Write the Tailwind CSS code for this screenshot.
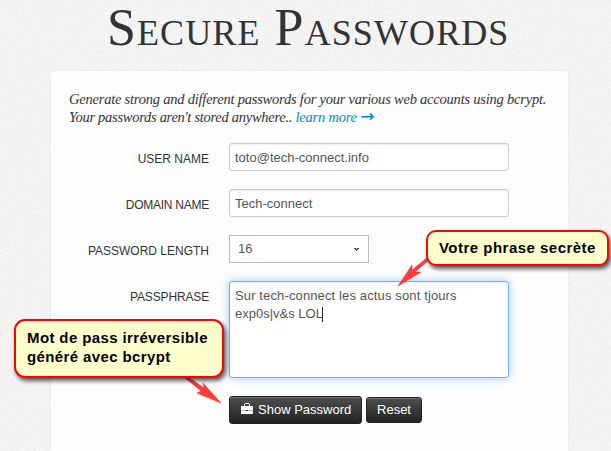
<!DOCTYPE html>
<html lang="en">
<head>
  <meta charset="UTF-8" />
  <meta name="viewport" content="width=device-width, initial-scale=1.0" />
  <title>Secure Passwords</title>
  <script src="https://cdn.jsdelivr.net/npm/@tailwindcss/browser@4"></script>
</head>
<body class="relative h-[451px] overflow-hidden bg-[#f3f3f3] font-['Liberation_Sans',Arial,sans-serif] text-[13px] leading-[18px] text-[#333]">
  <!-- paper texture -->
  <svg class="absolute inset-0 -z-10 h-full w-full" aria-hidden="true">
    <filter id="grain" x="0" y="0" width="100%" height="100%" color-interpolation-filters="sRGB">
      <feTurbulence type="fractalNoise" baseFrequency="0.6" numOctaves="2" seed="4" />
      <feColorMatrix values="0.07 0 0 0 0.918  0.07 0 0 0 0.918  0.07 0 0 0 0.918  0 0 0 0 1" />
    </filter>
    <rect width="100%" height="100%" filter="url(#grain)" />
  </svg>

  <h1 class="h-[71px] pl-[107px] font-['Liberation_Serif',serif] text-[52px] leading-[56px] tracking-[1.1px] whitespace-nowrap [font-variant:small-caps]">Secure Passwords</h1>

  <div class="ml-[51px] h-[400px] w-[517px] rounded-t-[3px] bg-[#fdfdfd] px-[18px] pt-[19px] shadow-[0_0_2px_rgba(0,0,0,0.08)]">
    <p class="h-[53px] font-['Liberation_Serif',serif] text-[14.5px] leading-[18px] tracking-[-0.22px] whitespace-nowrap italic">
      Generate strong and different passwords for your various web accounts using bcrypt.<br>
      <span class="tracking-[-0.28px]">Your passwords aren't stored anywhere.. </span><a href="#" class="text-[#0088cc]">learn more <span class="font-['DejaVu_Sans'] text-[17px] leading-none not-italic">→</span></a>
    </p>

    <form class="flex flex-col gap-[18px]" onsubmit="return false">
      <div class="flex gap-5">
        <label for="user" class="w-[140px] pt-[7px] text-right text-[12px]">USER NAME</label>
        <input id="user" type="text" value="toto@tech-connect.info" class="h-7 w-[280px] rounded-[3px] border border-[#ccc] bg-white px-[5px] text-[13px] text-[#555] shadow-[inset_0_1px_1px_rgba(0,0,0,0.075)]" />
      </div>
      <div class="flex gap-5">
        <label for="domain" class="w-[140px] pt-[7px] text-right text-[12px] tracking-[-0.25px]">DOMAIN NAME</label>
        <input id="domain" type="text" value="Tech-connect" class="h-7 w-[280px] rounded-[3px] border border-[#ccc] bg-white px-[5px] text-[13px] text-[#555] shadow-[inset_0_1px_1px_rgba(0,0,0,0.075)]" />
      </div>
      <div class="flex gap-5">
        <span class="w-[140px] pt-[7px] text-right text-[12px]">PASSWORD LENGTH</span>
        <div class="flex h-7 w-[140px] items-center justify-between border border-[#bbb] bg-white pl-[8px] pr-[9px] text-[#555]">
          <span>16</span>
          <svg class="h-[3px] w-[5px]" viewBox="0 0 5 3" shape-rendering="crispEdges"><path d="M0 0h2v1h1V0h2v1H4v1H3v1H2V2H1V1H0z" fill="#444" /></svg>
        </div>
      </div>
      <div class="flex gap-5">
        <span class="w-[140px] pt-[7px] text-right text-[12px] tracking-[-0.15px]">PASSPHRASE</span>
        <div class="h-[97px] w-[280px] rounded-[3px] border border-[#6fb5ee] bg-white px-[5px] pt-[5px] text-[#555] shadow-[inset_0_1px_1px_rgba(0,0,0,0.075),0_0_8px_rgba(82,168,236,0.6)]">
          <span class="tracking-[0.13px]">Sur tech-connect les actus sont tjours</span><br>exp0s|v&amp;s LOL<span class="-ml-px inline-block h-[15px] w-px bg-[#222] align-middle"></span>
        </div>
      </div>
      <div class="flex items-center gap-1 pl-[160px]">
        <button class="flex h-7 w-[133px] items-center rounded-[3px] border border-[#222] bg-linear-to-b from-[#505050] to-[#222] pl-[11px] text-[13px] text-white shadow-[inset_0_1px_0_rgba(255,255,255,0.2)]">
          <svg class="mr-[5px] -mt-[3px] h-[11px] w-3" viewBox="0 0 12 11" shape-rendering="crispEdges">
            <path d="M4 0h4v1h1v2h3v4H0V3h3V1h1zM4 1v2h4V1z" fill="#fff" fill-rule="evenodd" />
            <path d="M0 8h12v3H0z" fill="#fff" />
            <path d="M0 7h5v1H0zM7 7h5v1H7z" fill="#bbb" />
          </svg>
          Show Password
        </button>
        <button class="h-[26px] w-14 rounded-[3px] border border-[#222] bg-linear-to-b from-[#505050] to-[#222] text-[13px] leading-[24px] text-white shadow-[inset_0_1px_0_rgba(255,255,255,0.2)]">Reset</button>
      </div>
    </form>
  </div>

  <!-- callout arrows -->
  <svg class="absolute inset-0 h-full w-full" viewBox="0 0 611 451" aria-hidden="true">
    <g fill="#ff3b3b" stroke="#e02828" stroke-width="0.5">
      <path d="M398 286L412 265L412 270L428 257L430 259L415 272L421 272Z" />
      <path d="M221 403L197 393L201 391L184 377L188 377L204 388L203 383Z" />
    </g>
  </svg>

  <!-- callouts -->
  <div class="absolute left-[426px] top-[230px] flex h-[36px] w-[183px] items-center rounded-[10px] border-2 border-[#f00808] bg-[#ffffcc] pl-[11px] text-[15px] font-bold tracking-[0.48px] whitespace-nowrap text-black shadow-[2px_3px_4px_rgba(0,0,0,0.65)]">Votre phrase secrète</div>
  <div class="absolute left-[14px] top-[319px] h-[59px] w-[210px] rounded-[11px] border-2 border-[#f00808] bg-[#ffffcc] pl-[11px] pt-[7px] text-[15px] leading-[19px] font-bold tracking-[0.38px] whitespace-nowrap text-black shadow-[2px_3px_4px_rgba(0,0,0,0.65)]">Mot de pass irréversible<br>généré avec bcrypt</div>
</body>
</html>
